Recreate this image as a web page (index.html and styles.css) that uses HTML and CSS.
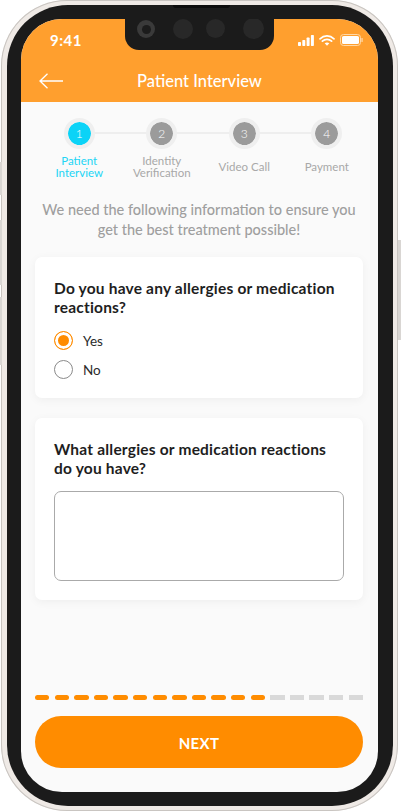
FILE: index.html
```html
<!DOCTYPE html>
<html lang="en">
<head>
<meta charset="utf-8">
<title>Patient Interview</title>
<link rel="stylesheet" href="styles.css">
</head>
<body>
<div class="phone">
  <span class="side side-l1"></span>
  <span class="side side-l2"></span>
  <span class="side side-l3"></span>
  <span class="side side-r"></span>
  <div class="bezel">
    <span class="speaker"></span>
    <div class="screen">
      <div class="notch">
        <span class="cam"><span class="lens"></span></span>
        <span class="dot d1"></span>
        <span class="dot d2"></span>
        <span class="dot d3"></span>
      </div>
      <header class="header">
        <div class="status">
          <span class="time">9:41</span>
          <div class="status-icons">
            <svg class="ico-signal" width="16" height="11" viewBox="0 0 16 11"><rect x="0" y="7" width="3" height="4" rx=".7"/><rect x="4.3" y="5" width="3" height="6" rx=".7"/><rect x="8.6" y="2.6" width="3" height="8.4" rx=".7"/><rect x="12.9" y="0" width="3" height="11" rx=".7"/></svg>
            <svg class="ico-wifi" width="16" height="11" viewBox="0 0 16 11"><path d="M1 3.8C5-.1 11-.1 15 3.8M3.4 6.2c2.6-2.4 6.6-2.4 9.2 0" fill="none" stroke="#fff" stroke-width="1.7" stroke-linecap="round"/><path d="M5.7 8.2c1.4-1 3.2-1 4.6 0L8 10.8z" fill="#fff"/></svg>
            <svg class="ico-batt" width="23" height="12" viewBox="0 0 23 12"><rect x=".5" y=".5" width="20" height="11" rx="3" fill="none" stroke="#ffd9a8"/><rect x="2" y="2" width="17" height="8" rx="1.6" fill="#fff"/><rect x="21.4" y="4" width="1.3" height="4" rx=".6" fill="#ffd9a8"/></svg>
          </div>
        </div>
        <div class="titlebar">
          <svg class="back" width="24" height="16" viewBox="0 0 24 16"><path d="M24 8H1M8.5 .8 1 8l7.5 7.2" fill="none" stroke="#fff" stroke-width="1.3"/></svg>
          <h1 class="title">Patient Interview</h1>
        </div>
      </header>

      <main class="content">
        <ol class="steps">
          <li class="step active"><span class="num">1</span><span class="label">Patient Interview</span></li>
          <li class="step"><span class="num">2</span><span class="label">Identity Verification</span></li>
          <li class="step"><span class="num">3</span><span class="label">Video Call</span></li>
          <li class="step"><span class="num">4</span><span class="label">Payment</span></li>
        </ol>

        <p class="intro">We need the following information to ensure you get the best treatment possible!</p>

        <section class="card card-radio">
          <h2 class="question">Do you have any allergies or medication reactions?</h2>
          <div class="option"><span class="radio checked"></span><span>Yes</span></div>
          <div class="option"><span class="radio"></span><span>No</span></div>
        </section>

        <section class="card card-text">
          <h2 class="question">What allergies or medication reactions do you have?</h2>
          <div class="textbox"></div>
        </section>

        <div class="spacer"></div>

        <div class="progress">
          <span class="seg on"></span><span class="seg on"></span><span class="seg on"></span><span class="seg on"></span>
          <span class="seg on"></span><span class="seg on"></span><span class="seg on"></span><span class="seg on"></span>
          <span class="seg on"></span><span class="seg on"></span><span class="seg on"></span><span class="seg on"></span>
          <span class="seg"></span><span class="seg"></span><span class="seg"></span><span class="seg"></span><span class="seg"></span>
        </div>

        <button class="next">NEXT</button>
      </main>
    </div>
  </div>
</div>
</body>
</html>
```

FILE: styles.css
```css
* { box-sizing: border-box; }
html, body { margin: 0; padding: 0; background: #fff; }
body { width: 401px; height: 812px; overflow: hidden; font-family: "Lato", "Noto Sans", sans-serif; }

.phone {
  position: relative;
  width: 397px;
  height: 811px;
  margin-left: 1px;
  padding: 4.5px 5px 5px 5.5px;
  border-radius: 66px;
  background: #efeae6;
  box-shadow: inset 0 0 0 1px #c9c5c1;
}
.side { position: absolute; background: #d9d6d3; }
.side-l1 { left: -1px; top: 162px; width: 2px; height: 33px; }
.side-l2 { left: -1px; top: 220px; width: 2px; height: 65px; }
.side-l3 { left: -1px; top: 297px; width: 2px; height: 68px; }
.side-r { right: -3px; top: 240px; width: 3px; height: 100px; }

.bezel {
  position: relative;
  height: 100%;
  padding: 14.5px 15px 14px 14.5px;
  border-radius: 61px;
  background: #1b1b1b;
}
.speaker {
  position: absolute;
  left: 166px; top: 0;
  width: 57px; height: 3px;
  border-radius: 0 0 3px 3px;
  background: #0c0c0c;
}
.screen {
  position: relative;
  display: flex;
  flex-direction: column;
  height: 100%;
  border-radius: 41px;
  overflow: hidden;
  background: #fafafa;
}
.notch {
  position: absolute;
  left: 104px; top: 0;
  width: 149px; height: 31px;
  display: flex;
  align-items: center;
  border-radius: 0 0 14px 14px;
  background: #1b1b1b;
}
.cam, .dot { position: absolute; border-radius: 50%; background: #282828; }
.cam { left: 12px; top: 1px; width: 18px; height: 18px; background: #3a3a3a; display: flex; align-items: center; justify-content: center; }
.lens { width: 9px; height: 9px; border-radius: 50%; background: #1c1c1c; }
.d1 { left: 48px; top: 0; width: 20px; height: 20px; }
.d2 { left: 81px; top: 0; width: 19px; height: 19px; }
.d3 { left: 118px; top: -1px; width: 21px; height: 21px; }

.header { height: 83px; background: #ff9f2e; color: #fff; flex: none; }
.status {
  display: flex;
  justify-content: space-between;
  align-items: center;
  height: 42px;
  padding: 0 15px 0 29px;
}
.time { font-size: 15px; font-weight: 700; letter-spacing: .5px; }
.status-icons { display: flex; align-items: center; gap: 5px; }
.ico-signal { fill: #fff; }
.titlebar { position: relative; display: flex; justify-content: center; align-items: center; height: 41px; }
.back { position: absolute; left: 18px; top: 12px; }
.title { margin: 0; font-size: 16.5px; font-weight: 500; line-height: 41px; }

.content { flex: 1; display: flex; flex-direction: column; padding: 0 15px 24px 14px; min-height: 0; }

.steps {
  list-style: none;
  margin: 16px -5px 0 3px;
  padding: 0;
  display: grid;
  grid-template-columns: repeat(4, 1fr);
}
.step { position: relative; display: flex; flex-direction: column; align-items: center; color: #a8a8a8; font-size: 11.5px; line-height: 12px; text-align: center; }
.step:not(:last-child)::after {
  content: "";
  position: absolute;
  left: 50%; top: 14px;
  width: 100%; height: 2px;
  background: #eee;
}
.num {
  position: relative;
  z-index: 1;
  width: 31px; height: 31px;
  display: flex; align-items: center; justify-content: center;
  border: 4px solid #efefef;
  border-radius: 50%;
  background: #9b9b9b;
  background-clip: padding-box;
  color: #fff;
  font-size: 12px;
  font-weight: 300;
}
.label { height: 24px; width: 76px; margin-top: 6px; display: flex; align-items: center; justify-content: center; }
.active { color: #22d5f5; }
.active .num { background-color: #0bd3f7; }

.intro {
  margin: 21px 0 0;
  padding: 0 2px;
  color: #9f9f9f;
  font-size: 14.5px;
  font-weight: 500;
  line-height: 19.5px;
  text-align: center;
}

.card {
  margin-top: 18px;
  padding: 21.5px 19px 0;
  border-radius: 7px;
  background: #fff;
  box-shadow: 0 2px 10px rgba(0, 0, 0, .05);
}
.card-radio { height: 141px; }
.card-text { height: 182px; margin-top: 20px; }
.question { margin: 0; color: #1e1e1e; font-size: 15.5px; font-weight: 700; line-height: 19px; letter-spacing: .2px; }
.option { display: flex; align-items: center; gap: 10px; height: 29px; color: #2b2b2b; font-size: 13.5px; }
.question + .option { margin-top: 9.5px; }
.radio { width: 19px; height: 19px; border: 1px solid #8a8a8a; border-radius: 50%; background: #fff; flex: none; }
.radio.checked { border-color: #ff8c00; background: #ff8c00; box-shadow: inset 0 0 0 3px #fff; }
.textbox { height: 90px; margin-top: 13.5px; border: 1px solid #aaa; border-radius: 7px; background: #fff; }

.spacer { flex: 1; }
.progress { display: flex; justify-content: space-between; height: 4.5px; margin-bottom: 16.5px; }
.seg { width: 14.4px; height: 4.5px; background: #d9d9d9; }
.seg.on { border-radius: 2.5px; background: #ff8c00; }
.next {
  height: 52px;
  padding: 1px 0 0;
  border: 0;
  border-radius: 26px;
  background: #ff8c00;
  color: #fff;
  font-family: inherit;
  font-size: 15px;
  font-weight: 700;
  letter-spacing: .3px;
}
```
